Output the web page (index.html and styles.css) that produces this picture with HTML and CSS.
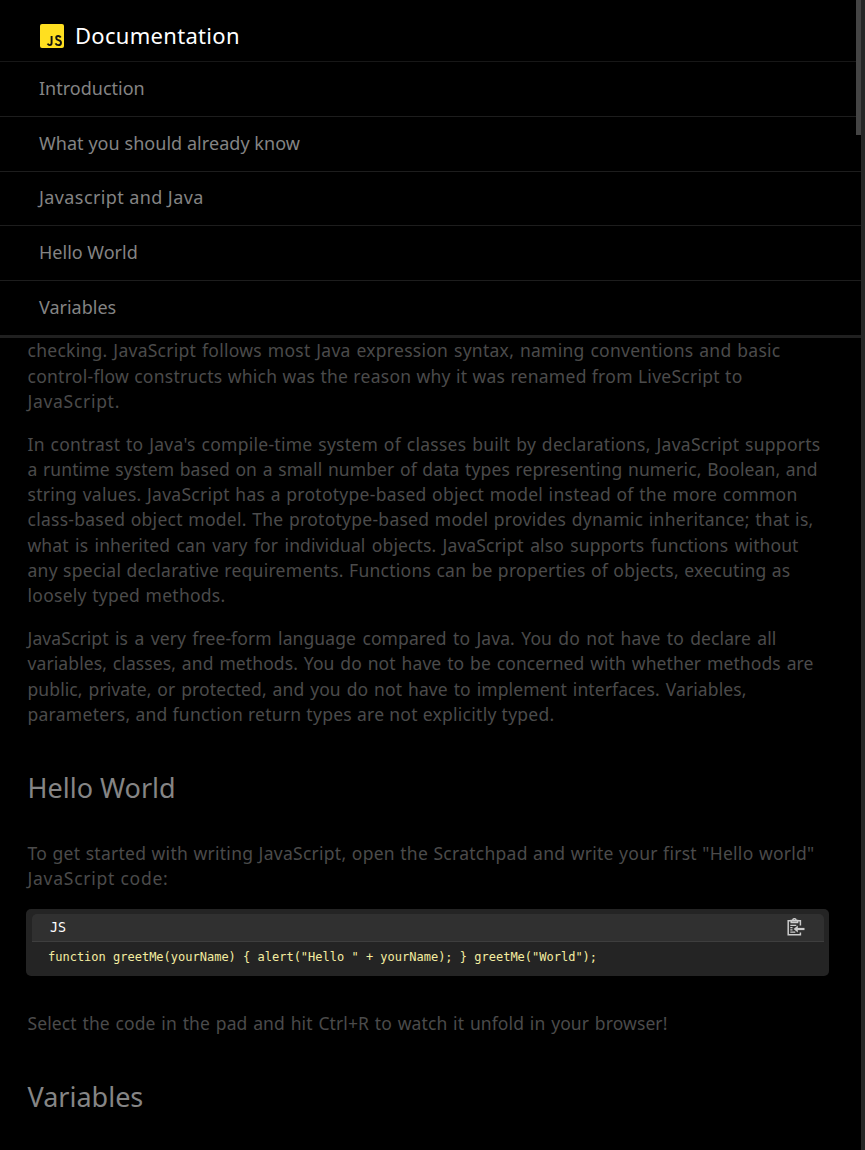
FILE: index.html
```html
<!DOCTYPE html>
<html lang="en">
<head>
<meta charset="utf-8">
<title>JS Documentation</title>
<link rel="stylesheet" href="styles.css">
</head>
<body>
<nav class="navbar">
  <header class="brand">
    <svg class="logo" viewBox="0 0 24 24"><rect width="24" height="24" rx="2" fill="#ffdf20"/><path d="M11.6 12v7.1q0 2-1.8 2-1.4 0-2.2-1.5M20.7 13.5q-.8-1.5-2.5-1.5-2 0-2 1.9 0 1.5 2.3 2.3 2.5.8 2.5 2.5 0 2.4-2.5 2.4-2.1 0-3-1.8" fill="none" stroke="#111" stroke-width="1.9"/></svg>
    <span class="title">Documentation</span>
  </header>
  <a class="link"><span class="n1">Introduction</span></a>
  <a class="link"><span class="n2">What you should already know</span></a>
  <a class="link"><span class="n3">Javascript and Java</span></a>
  <a class="link"><span class="n4">Hello World</span></a>
  <a class="link"><span class="n5">Variables</span></a>
  <div class="nav-thumb"></div>
</nav>
<div class="page-scroll"></div>
<main class="content">
  <p class="text">
    <span class="line w753">checking. JavaScript follows most Java expression syntax, naming conventions and basic</span>
    <span class="line w715">control-flow constructs which was the reason why it was renamed from LiveScript to</span>
    <span class="line short">JavaScript.</span>
  </p>
  <p class="text">
    <span class="line w793">In contrast to Java's compile-time system of classes built by declarations, JavaScript supports</span>
    <span class="line tight w790">a runtime system based on a small number of data types representing numeric, Boolean, and</span>
    <span class="line w770">string values. JavaScript has a prototype-based object model instead of the more common</span>
    <span class="line w786">class-based object model. The prototype-based model provides dynamic inheritance; that is,</span>
    <span class="line tight w771">what is inherited can vary for individual objects. JavaScript also supports functions without</span>
    <span class="line w763">any special declarative requirements. Functions can be properties of objects, executing as</span>
    <span class="line w198">loosely typed methods.</span>
  </p>
  <p class="text">
    <span class="line tight w749">JavaScript is a very free-form language compared to Java. You do not have to declare all</span>
    <span class="line tight w786">variables, classes, and methods. You do not have to be concerned with whether methods are</span>
    <span class="line tight w719">public, private, or protected, and you do not have to implement interfaces. Variables,</span>
    <span class="line w527">parameters, and function return types are not explicitly typed.</span>
  </p>
  <h2 class="heading hello">Hello World</h2>
  <p class="text">
    <span class="line w787">To get started with writing JavaScript, open the Scratchpad and write your first "Hello world"</span>
    <span class="line loose w139">JavaScript code:</span>
  </p>
  <section class="code">
    <div class="code-bar">
      <span class="lang">JS</span>
      <svg class="copy" viewBox="0 0 18 18" fill="none" stroke="#ccc" stroke-width="1.5"><path d="M13.4 7.5V2.7H1.2v14h12.2V14.5M4.2 4.6V2.6h1.4Q5.8.7 7.4.7t1.8 1.9h1.4v2z"/><path d="M3.3 7.4h6M3.3 9.6h2.2M3.3 11.8h2.2M3.3 14.1h5" stroke-width="1.2"/><path d="M17.5 11H9" stroke-width="2.2"/><path d="M10.8 7.4v7.2L6.6 11z" fill="#ccc" stroke="none"/></svg>
    </div>
    <code class="source">function greetMe(yourName) { alert("Hello " + yourName); } greetMe("World");</code>
  </section>
  <p class="text after"><span class="line tight w640">Select the code in the pad and hit Ctrl+R to watch it unfold in your browser!</span></p>
  <h2 class="heading vars">Variables</h2>
</main>
</body>
</html>
```
FILE: styles.css
```css
* { box-sizing: border-box; }
html, body { margin: 0; height: 1150px; overflow: hidden; background: #000; }
body { font-family: "Noto Sans", sans-serif; color: #4b4b4b; }
.navbar { position: relative; width: 861px; height: 338px; border-bottom: 3px solid #202020; }
.brand { height: 62px; padding: 11px 0 0 40px; display: flex; align-items: center; gap: 11px; }
.brand { border-bottom: 1px solid #171717; }
.logo { width: 24px; height: 24px; }
.title { color: #fff; font-size: 22px; line-height: 30px; letter-spacing: .3px; padding-bottom: 2px; }
.link { display: flex; height: 54.8px; align-items: center; padding: 0 0 2px 39px; font-size: 18px; color: #848484; border-bottom: 1px solid #1d1d1d; }
.link:nth-of-type(5) { border: 0; padding-bottom: 3px; }
.n2 { letter-spacing: .05px; }
.n3 { letter-spacing: .4px; }
.nav-thumb { position: absolute; top: 0; right: 0; width: 5px; height: 135px; background: #444; }
.page-scroll { position: absolute; top: 0; right: 0; width: 4px; height: 1150px; background: #262626; }
.content { padding: 0.3px 36px 0 27.5px; }
.text { margin: 0 0 17.4px; font-size: 17.5px; line-height: 25.3px; letter-spacing: .27px; }
.line { display: block; white-space: nowrap; text-align-last: justify; }
.short { text-align-last: left; letter-spacing: .7px; }
.tight { letter-spacing: .1px; }
.loose { letter-spacing: .75px; }
.w753 { width: 753px; } .w715 { width: 715px; } .w793 { width: 793px; }
.w790 { width: 790px; } .w770 { width: 770px; } .w786 { width: 786px; }
.w771 { width: 771px; } .w763 { width: 763px; } .w198 { width: 198px; }
.w749 { width: 749px; } .w719 { width: 719px; } .w527 { width: 527px; }
.w787 { width: 787px; } .w139 { width: 139px; } .w640 { width: 640px; }
.heading { margin: 43px 0 34.5px; height: 36px; line-height: 36px; font-size: 27px; font-weight: 400; color: #858585; }
.code { width: 803px; height: 67px; margin: 0 0 35px -1.5px; padding: 5px 5px 0 6px; border-radius: 5px; background: #242424; }
.code-bar { display: flex; height: 28px; padding: 0 19px 0 18px; align-items: center; justify-content: space-between; background: #303030; border-bottom: 1px solid #3e3e3e; border-radius: 5px 5px 0 0; }
.lang { font: 13.3px "DejaVu Sans Mono", monospace; color: #fff; }
.copy { width: 18px; height: 18px; }
.source { display: block; padding-left: 16px; font: 12px/31px "DejaVu Sans Mono", monospace; color: #f4eda0; white-space: pre; }
```
